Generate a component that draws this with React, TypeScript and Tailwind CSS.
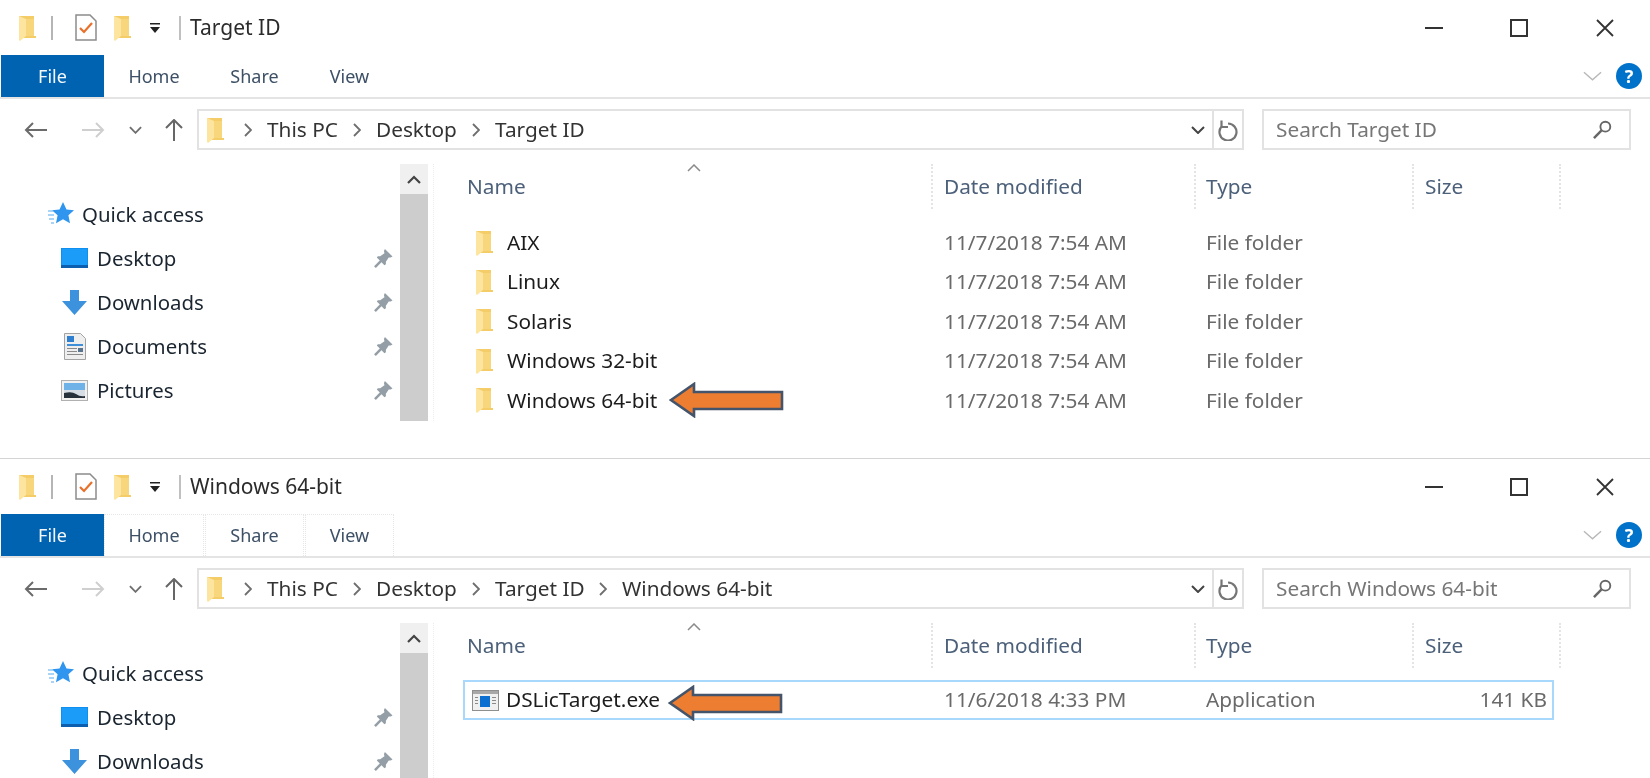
import type { ReactNode } from 'react';

function FolderIcon({ className = 'w-[18px] h-[26px]' }: { className?: string }) {
  return (
    <svg viewBox="0 0 18 26" className={className}>
      <path d="M1 1h15v20h2v2H1z" fill="#f4cd68" />
      <path d="M1 1l7 3v17L2 26l-1-1z" fill="#fde5a0" />
      <path d="M8 4h8v17H8z" fill="#f7d67c" />
    </svg>
  );
}

function TaskDoc() {
  return (
    <svg viewBox="0 0 22 27" className="w-[22px] h-[27px]">
      <path d="M1 1h14l6 6v19H1z" fill="#fff" stroke="#8c8c8c" strokeWidth="1.5" />
      <path d="M5 14l4 4 8-9" fill="none" stroke="#e8702a" strokeWidth="2.2" />
    </svg>
  );
}

function Arrow({ className }: { className: string }) {
  return (
    <svg viewBox="0 0 116 36" className={className}>
      <path d="M2 18 25 2v8h88v17H25v7z" fill="#ed7d31" stroke="#44546a" strokeWidth="2.6" />
    </svg>
  );
}

function Pin() {
  return (
    <svg viewBox="0 0 20 20" className="w-[19px] h-[19px]">
      <path d="M11.500 0 L19.500 8 L17.500 9 L15.500 9 L12.500 13.500 L12.500 16 L11 17 L3 9 L4 7.500 L6.500 7.500 L11 4.500 L10.500 2z" fill="#939ea6" />
      <path d="M7.500 12.500 L1 19" stroke="#939ea6" strokeWidth="2.6" />
    </svg>
  );
}

function DesktopIcon() {
  return (
    <svg viewBox="0 0 27 20" className="w-[27px] h-[20px]">
      <rect width="27" height="20" fill="#0f8ff0" />
      <rect x="1" y="1" width="25" height="16" fill="#1a9cf8" />
      <rect y="17" width="27" height="3" fill="#0b5fae" />
    </svg>
  );
}

function DownloadIcon() {
  return (
    <svg viewBox="0 0 25 25" className="w-[25px] h-[25px]">
      <path d="M8 0h9v11h8L12.500 25 0 11h8z" fill="#3c92dc" />
    </svg>
  );
}

function DocumentsIcon() {
  return (
    <svg viewBox="0 0 22 27" className="w-[22px] h-[27px]">
      <path d="M.5.5h16l5 5v21H.5z" fill="#eeeeee" stroke="#a3a3a3" />
      <rect x="3" y="3" width="7" height="6" fill="#2f7fd0" />
      <path d="M3 11h16v2H3z" fill="#3f8fd8" />
      <path d="M3 15h10v1H3zM3 18h10v1H3zM3 21h16v1H3z" fill="#8a8a8a" />
      <rect x="14" y="15" width="5" height="4" fill="#59748c" />
    </svg>
  );
}

function PicturesIcon() {
  return (
    <svg viewBox="0 0 27 21" className="w-[27px] h-[21px]">
      <rect x=".5" y=".5" width="26" height="20" fill="#f1f1f1" stroke="#b0b0b0" />
      <rect x="3" y="3" width="21" height="7" fill="#6fb2e8" />
      <rect x="3" y="10" width="21" height="8" fill="#d6dde4" />
      <path d="M3 13q8-2 12 1t9 2v2H3z" fill="#27313c" />
    </svg>
  );
}

function ExeIcon() {
  return (
    <svg viewBox="0 0 27 21" className="w-[27px] h-[21px]">
      <rect x=".5" y=".5" width="26" height="20" fill="#f0f0f0" stroke="#8f8f8f" />
      <rect x="1" y="1" width="25" height="3" fill="#a8a8a8" />
      <rect x="8" y="6" width="10" height="11" fill="#0a6fd0" />
      <path d="M3 7h3v1H3zM3 10h3v1H3zM3 13h3v1H3zM20 7h4v1h-4zM20 10h4v1h-4zM20 13h4v1h-4z" fill="#8a8a8a" />
    </svg>
  );
}

function Chevron() {
  return (
    <svg viewBox="0 0 8 14" className="w-[8px] h-[14px] shrink-0">
      <path d="M1 1l6 6-6 6" fill="none" stroke="#6e6e6e" strokeWidth="1.8" />
    </svg>
  );
}

function NavRow({ icon, label }: { icon: ReactNode; label: string }) {
  return (
    <div className="h-[44px] flex items-center pl-[61px] pr-[7px]">
      <div className="w-[27px] flex justify-center">{icon}</div>
      <span className="ml-[9px] flex-1 text-[#1a2530]">{label}</span>
      <Pin />
    </div>
  );
}

function Window({
  title,
  search,
  crumbs,
  navItems,
  height,
  tabBorders,
  children,
}: {
  title: string;
  search: string;
  crumbs: { label: string; width: string }[];
  navItems: ReactNode;
  height: string;
  tabBorders?: boolean;
  children: ReactNode;
}) {
  const tabClass = tabBorders ? 'border border-b-0 border-dotted border-[#e6e6e6]' : '';
  return (
    <div className={`${height} overflow-hidden bg-white`}>
      {/* title bar */}
      <div className="h-[55px] flex items-center pl-[18px]">
        <FolderIcon />
        <div className="ml-[15px] w-[2px] h-[24px] bg-[#b5b5b5]" />
        <div className="ml-[22px]"><TaskDoc /></div>
        <div className="ml-[16px]"><FolderIcon /></div>
        <svg viewBox="0 0 10 10" className="ml-[19px] w-[10px] h-[10px]">
          <path d="M0 0h10v1.500H0zM0 4h10L5 10z" fill="#222" />
        </svg>
        <div className="ml-[19px] w-[2px] h-[24px] bg-[#c0c0c0]" />
        <span className="ml-[9px] text-[#2b2b2b] text-[21px]">{title}</span>
        <div className="ml-auto flex items-center">
          <div className="w-[18px] h-[2px] bg-[#333]" />
          <div className="ml-[67px] w-[18px] h-[18px] border-2 border-[#333]" />
          <svg viewBox="0 0 18 18" className="ml-[68px] mr-[36px] w-[18px] h-[18px]">
            <path d="M1 1l16 16M17 1L1 17" stroke="#333" strokeWidth="1.8" />
          </svg>
        </div>
      </div>

      {/* ribbon tabs */}
      <div className="h-[44px] flex border-b-2 border-[#e4e4e4] text-[18px]">
        <div className="ml-px w-[103px] h-[42px] bg-[#0063b1] text-[#f4f8fc] flex items-center justify-center">File</div>
        <div className={`w-[100px] h-[42px] flex items-center justify-center text-[#3d5066] ${tabClass}`}>Home</div>
        <div className={`ml-px w-[99px] h-[42px] flex items-center justify-center text-[#3d5066] ${tabClass}`}>Share</div>
        <div className={`ml-px w-[89px] h-[42px] flex items-center justify-center text-[#3d5066] ${tabClass}`}>View</div>
        <div className="ml-auto flex items-center mr-[8px]">
          <svg viewBox="0 0 20 10" className="w-[19px] h-[10px]">
            <path d="M1 1l9 8 9-8" fill="none" stroke="#b8b8b8" strokeWidth="1.500" />
          </svg>
          <div className="ml-[14px] w-[26px] h-[26px] rounded-full bg-[#0072c9] text-white text-[18px] font-bold flex items-center justify-center">?</div>
        </div>
      </div>

      {/* address row */}
      <div className="mt-[10px] h-[41px] flex items-center">
        <svg viewBox="0 0 24 16" className="ml-[24px] w-[24px] h-[16px]">
          <path d="M23 8H2M9 1L2 8l7 7" fill="none" stroke="#6b6b6b" strokeWidth="2" />
        </svg>
        <svg viewBox="0 0 24 16" className="ml-[33px] w-[24px] h-[16px]">
          <path d="M1 8h21M15 1l7 7-7 7" fill="none" stroke="#cfcfcf" strokeWidth="2" />
        </svg>
        <svg viewBox="0 0 14 8" className="ml-[24px] w-[13px] h-[8px]">
          <path d="M1 1l6 6 6-6" fill="none" stroke="#6e6e6e" strokeWidth="2" />
        </svg>
        <svg viewBox="0 0 18 22" className="ml-[23px] w-[18px] h-[22px]">
          <path d="M9 22V2M1 9l8-8 8 8" fill="none" stroke="#666" strokeWidth="2" />
        </svg>
        <div className="ml-[14px] w-[1047px] h-[41px] flex border-2 border-[#e2e2e2]">
          <div className="flex-1 flex items-center pl-[7px]">
            <FolderIcon className="w-[18px] h-[26px] shrink-0" />
            {crumbs.map((c) => (
              <div key={c.label} className={`${c.width} flex items-center shrink-0`}>
                <div className="ml-[20px]"><Chevron /></div>
                <span className="ml-[15px] text-[#333] whitespace-nowrap">{c.label}</span>
              </div>
            ))}
            <svg viewBox="0 0 14 8" className="ml-auto mr-[7px] w-[14px] h-[8px]">
              <path d="M1 1l6 6 6-6" fill="none" stroke="#444" strokeWidth="2" />
            </svg>
          </div>
          <div className="w-[30px] border-l-2 border-[#e2e2e2] flex items-center justify-center">
            <svg viewBox="0 0 22 22" className="w-[22px] h-[22px]">
              <path d="M11 4.500a8.500 8.500 0 1 1-6.500 3M4.500 1.500v6.500h6.500" fill="none" stroke="#757575" strokeWidth="2.200" />
            </svg>
          </div>
        </div>
        <div className="ml-[18px] w-[369px] h-[41px] border-2 border-[#e2e2e2] flex items-center pl-[12px] pr-[17px]">
          <span className="flex-1 text-[#767676]">{search}</span>
          <svg viewBox="0 0 20 20" className="w-[19px] h-[19px]">
            <circle cx="13" cy="7" r="5.200" fill="none" stroke="#666" strokeWidth="2" />
            <path d="M9 11l-8 8" stroke="#666" strokeWidth="2.600" />
          </svg>
        </div>
      </div>

      {/* body */}
      <div className="mt-[14px] flex">
        <div className="w-[440px] flex shrink-0">
          <div className="w-[400px] pt-[28px] text-[#1a2530] text-[20.400px]">{navItems}</div>
          <div className="w-[28px] h-[257px] bg-[#cdcdcd] shrink-0">
            <div className="h-[30px] bg-[#f0f0f0] flex items-center justify-center">
              <svg viewBox="0 0 14 9" className="w-[14px] h-[9px]">
                <path d="M1 8l6-6 6 6" fill="none" stroke="#444" strokeWidth="2.200" />
              </svg>
            </div>
          </div>
          <div className="ml-[5px] w-px h-[257px] border-l border-dotted border-[#ececec]" />
        </div>
        <div className="flex-1">{children}</div>
      </div>
    </div>
  );
}

function ColumnHeader() {
  return (
    <div className="h-[45px] flex text-[#4c607a]">
      <div className="relative w-[493px] pl-[27px] flex items-center border-r-2 border-dotted border-[#e4e4e4]">
        Name
        <svg viewBox="0 0 14 8" className="absolute left-[247px] top-[0px] w-[14px] h-[8px]">
          <path d="M1 7l6-6 6 6" fill="none" stroke="#8a8a8a" strokeWidth="1.500" />
        </svg>
      </div>
      <div className="w-[263px] pl-[11px] flex items-center border-r-2 border-dotted border-[#e4e4e4]">Date modified</div>
      <div className="w-[218px] pl-[10px] flex items-center border-r-2 border-dotted border-[#e4e4e4]">Type</div>
      <div className="w-[147px] pl-[11px] flex items-center border-r-2 border-dotted border-[#e4e4e4]">Size</div>
    </div>
  );
}

function FolderRow({ name, arrow }: { name: string; arrow?: boolean }) {
  return (
    <div className="relative h-[39.400px] flex items-center text-[#6a6a6a]">
      <div className="w-[493px] pl-[35px] flex items-center text-[#1c1c1c]">
        <FolderIcon />
        <span className="ml-[14px]">{name}</span>
      </div>
      <div className="w-[263px] pl-[11px]">11/7/2018 7:54 AM</div>
      <div className="pl-[10px]">File folder</div>
      {arrow && <Arrow className="absolute left-[229px] top-[1px] w-[116px] h-[36px]" />}
    </div>
  );
}

const topNav = (
  <>
    <div className="h-[44px] flex items-center pl-[48px]">
      <svg viewBox="0 0 26 24" className="w-[26px] h-[24px]">
        <path d="M15 0l3.500 7.500 7.500.8-5.600 5 1.600 8-7-4-7 4 1.600-8-5.600-5 7.500-.8z" fill="#2f95ee" />
        <path d="M0 9h5M0 13h6M1 17h5M3 21h3" stroke="#8cc6f5" strokeWidth="1.300" />
      </svg>
      <span className="ml-[8px]">Quick access</span>
    </div>
    <NavRow icon={<DesktopIcon />} label="Desktop" />
    <NavRow icon={<DownloadIcon />} label="Downloads" />
  </>
);

export default function App() {
  return (
    <div className="w-[1650px] h-[778px] overflow-hidden bg-white text-[20.800px] blur-[0.4px] font-['Noto_Sans',sans-serif]">
      <Window
        title="Target ID"
        search="Search Target ID"
        height="h-[458px]"
        crumbs={[
          { label: 'This PC', width: 'w-[109px]' },
          { label: 'Desktop', width: 'w-[119px]' },
          { label: 'Target ID', width: 'w-[126px]' },
        ]}
        navItems={
          <>
            {topNav}
            <NavRow icon={<DocumentsIcon />} label="Documents" />
            <NavRow icon={<PicturesIcon />} label="Pictures" />
          </>
        }
      >
        <ColumnHeader />
        <div className="mt-[14px]">
          <FolderRow name="AIX" />
          <FolderRow name="Linux" />
          <FolderRow name="Solaris" />
          <FolderRow name="Windows 32-bit" />
          <FolderRow name="Windows 64-bit" arrow />
        </div>
      </Window>

      <div className="h-px bg-[#d4d4d4]" />

      <Window
        title="Windows 64-bit"
        search="Search Windows 64-bit"
        height="h-[319px]"
        tabBorders
        crumbs={[
          { label: 'This PC', width: 'w-[109px]' },
          { label: 'Desktop', width: 'w-[119px]' },
          { label: 'Target ID', width: 'w-[127px]' },
          { label: 'Windows 64-bit', width: 'w-[180px]' },
        ]}
        navItems={topNav}
      >
        <ColumnHeader />
        <div className="relative ml-[23px] mt-[12px] w-[1091px] h-[40px] border-2 border-[#a8d8fb] flex items-center text-[#6a6a6a]">
          <div className="w-[468px] pl-[7px] flex items-center text-[#1c1c1c]">
            <ExeIcon />
            <span className="ml-[7px]">DSLicTarget.exe</span>
          </div>
          <div className="w-[262px] pl-[11px]">11/6/2018 4:33 PM</div>
          <div className="w-[218px] pl-[11px]">Application</div>
          <div className="w-[134px] text-right">141 KB</div>
          <Arrow className="absolute left-[203px] top-[3px] w-[116px] h-[36px]" />
        </div>
      </Window>
    </div>
  );
}
